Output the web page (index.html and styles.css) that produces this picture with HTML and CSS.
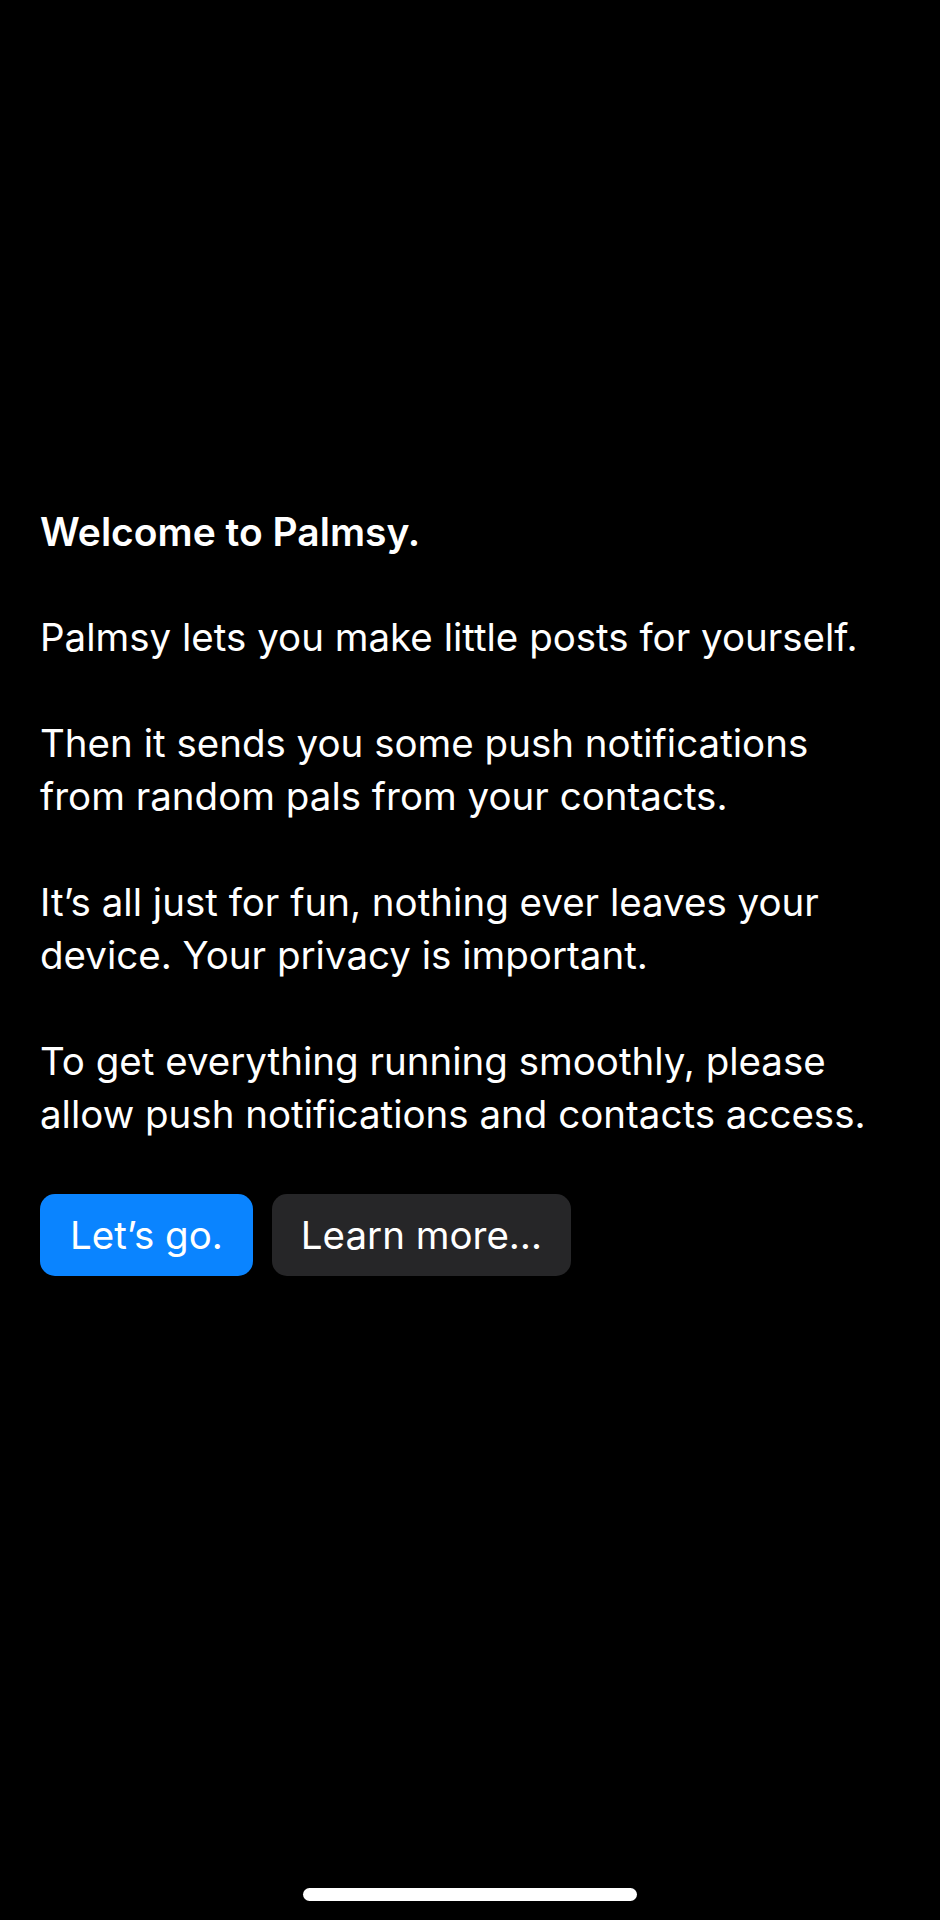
FILE: index.html
```html
<!DOCTYPE html>
<html>
<head>
<meta charset="utf-8">
<link rel="stylesheet" href="styles.css">
</head>
<body>
<main class="screen">
  <section class="content">
    <h1 class="title">Welcome to Palmsy.</h1>
    <p class="para">Palmsy lets you make little posts for yourself.</p>
    <p class="para">Then it sends you some push notifications<br>from random pals from your contacts.</p>
    <p class="para">It’s all just for fun, nothing ever leaves your<br>device. Your privacy is important.</p>
    <p class="para">To get everything running smoothly, please<br>allow push notifications and contacts access.</p>
    <div class="actions">
      <button class="btn btn-primary">Let’s go.</button>
      <button class="btn btn-secondary">Learn more…</button>
    </div>
  </section>
  <div class="home-indicator"></div>
</main>
</body>
</html>
```
FILE: styles.css
```css
html, body {
  margin: 0;
  padding: 0;
  background: #000;
}
.screen {
  width: 940px;
  height: 1920px;
  background: #000;
  color: #fff;
  font-family: Inter, "Noto Sans", sans-serif;
  display: flex;
  flex-direction: column;
  box-sizing: border-box;
  padding: 505px 40px 19px;
}
.content {
  flex: 1;
}
.title {
  margin: 0 0 53px;
  font-size: 39px;
  line-height: 53px;
  font-weight: 600;
}
.para {
  margin: 0 0 53px;
  font-size: 38.5px;
  line-height: 53px;
  font-weight: 400;
}
.actions {
  display: flex;
  gap: 19px;
  margin-top: 5px;
}
.btn {
  height: 82px;
  border: 0;
  border-radius: 15px;
  color: #fff;
  font-family: inherit;
  font-size: 38.5px;
  padding: 0 30px;
}
.btn-primary { background: #0a84ff; }
.btn-secondary {
  background: #262628;
  padding: 0 29px;
}
.home-indicator {
  align-self: center;
  width: 334px;
  height: 13px;
  border-radius: 7px;
  background: #fff;
}
```
